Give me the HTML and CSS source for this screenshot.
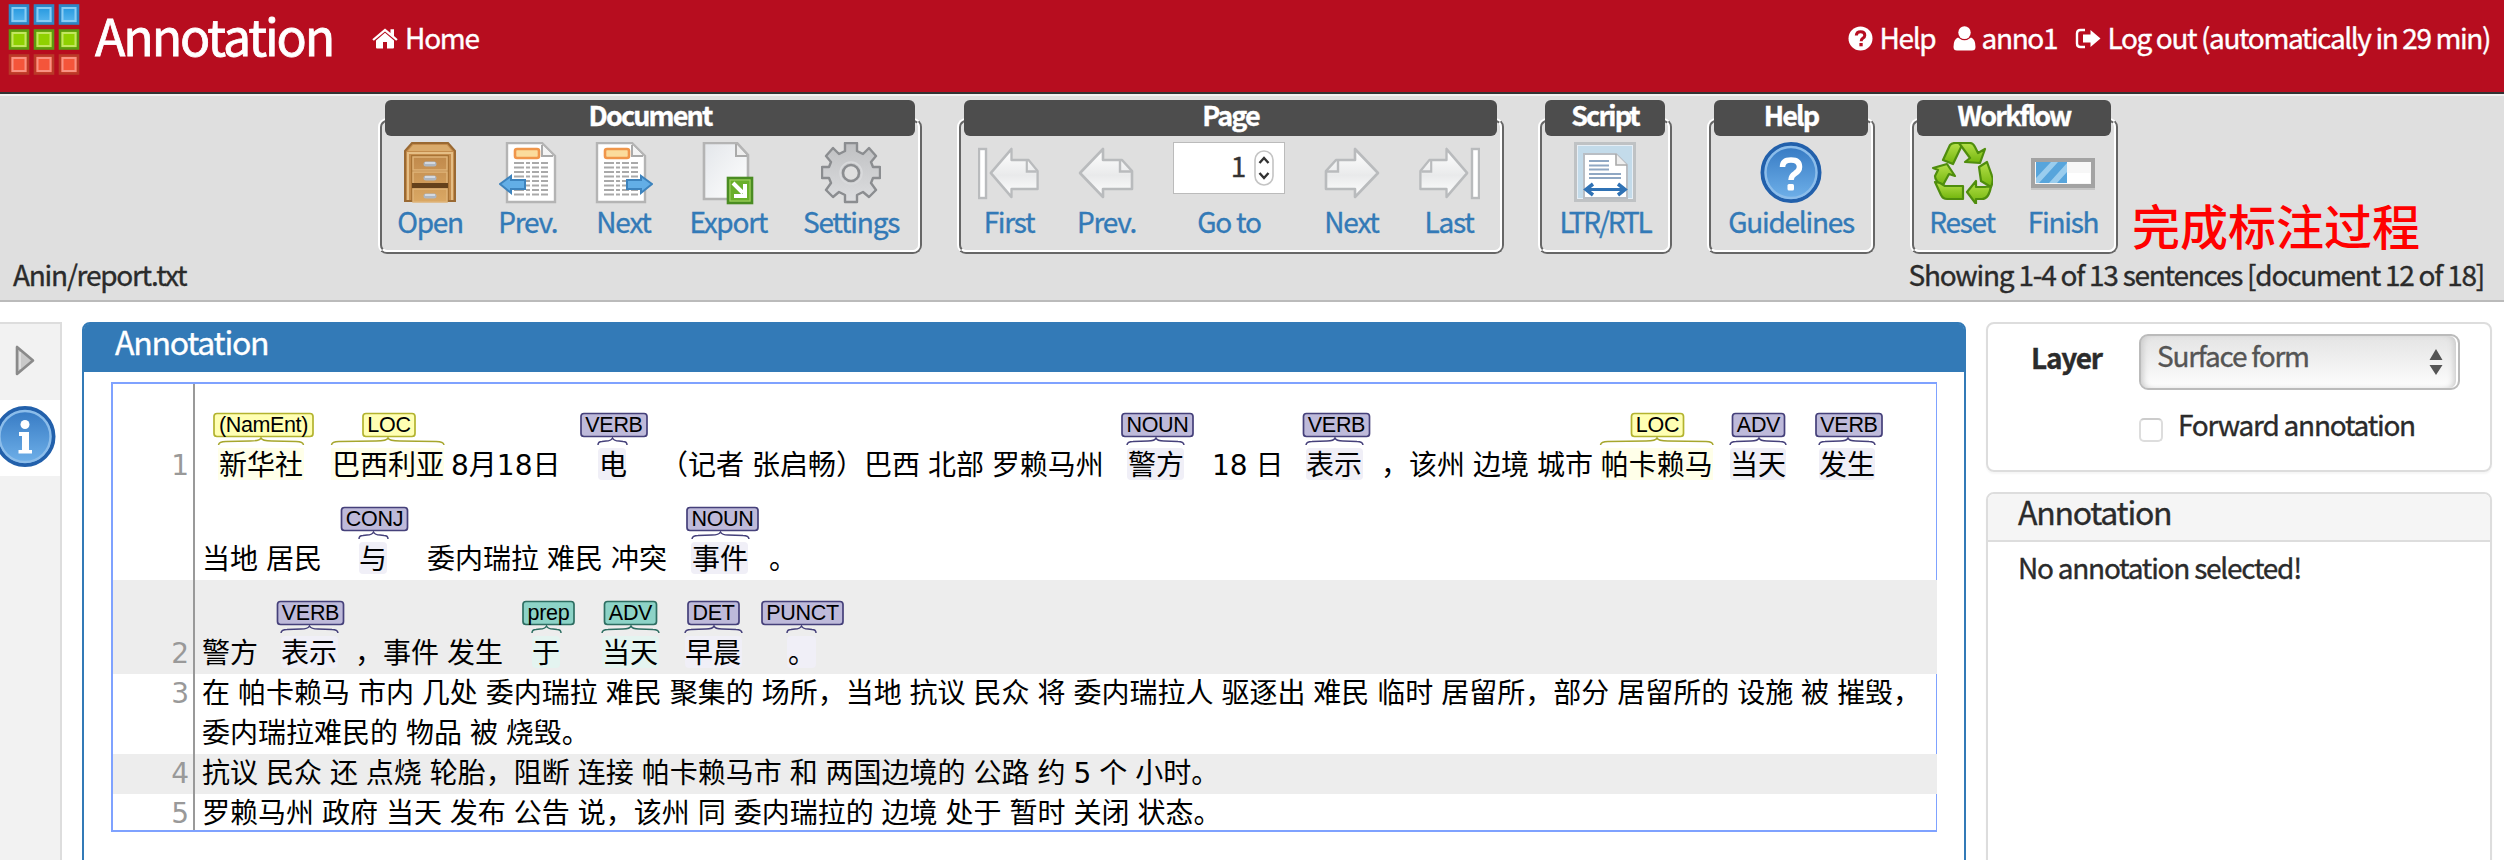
FILE: index.html
```html
<!DOCTYPE html>
<html lang="en">
<head>
<meta charset="utf-8">
<title>Annotation</title>
<link rel="stylesheet" href="styles.css">
</head>
<body>
<svg class="defs" width="0" height="0">
  <defs>
    <linearGradient id="gBlueSq" x1="0" y1="0" x2="0" y2="1"><stop offset="0" stop-color="#1f95dd"/><stop offset="1" stop-color="#5db9f0"/></linearGradient>
    <linearGradient id="gWood" x1="0" y1="0" x2="0" y2="1"><stop offset="0" stop-color="#c18a4c"/><stop offset="1" stop-color="#daa864"/></linearGradient>
    <linearGradient id="gBlue" x1="0" y1="0" x2="0" y2="1"><stop offset="0" stop-color="#3478c2"/><stop offset="1" stop-color="#71b2ea"/></linearGradient>
    <linearGradient id="gArrow" x1="0" y1="0" x2="0" y2="1"><stop offset="0" stop-color="#ffffff"/><stop offset=".55" stop-color="#e9eaeb"/><stop offset="1" stop-color="#ffffff"/></linearGradient>
    <linearGradient id="gGear" x1="0" y1="0" x2="0" y2="1"><stop offset="0" stop-color="#bfc0c2"/><stop offset="1" stop-color="#dddee0"/></linearGradient>
    <linearGradient id="gGreen" x1="0" y1="0" x2="0" y2="1"><stop offset="0" stop-color="#b5e04a"/><stop offset="1" stop-color="#72b50c"/></linearGradient>
    <linearGradient id="gPage" x1="0" y1="0" x2="1" y2="1"><stop offset="0" stop-color="#e3e6ea"/><stop offset="1" stop-color="#ffffff"/></linearGradient>
    <g id="textpage">
      <path d="M1 1H36L49 14V60H1Z" fill="#fff" stroke="#b4b4b4" stroke-width="2.4"/>
      <path d="M36 3V14H47" fill="#f4f4f4" stroke="#aaa" stroke-width="2"/>
      <rect x="9" y="7" width="24" height="9" rx="2" fill="#fbdc9c" stroke="#f0964a" stroke-width="2.6"/>
      <path d="M8 21H42M8 25.500H42M8 30H42M8 34.500H42M8 39H42M8 43.500H42M8 48H42M8 52.500H42" stroke="#a9a9a9" stroke-width="2" stroke-dasharray="10 2 4 2 7 2"/>
    </g>
    <path id="pagearrow" d="M2 27L25 3V14H44L54 25V43H25V51Z" fill="url(#gArrow)" stroke="#b9bbbd" stroke-width="2.600" stroke-linejoin="round"/>
    <path id="pagefold" d="M42 15V25.500H53" fill="none" stroke="#b9bbbd" stroke-width="2.400"/>
  </defs>
</svg>

<header class="topbar">
  <svg class="logo" width="74" height="76" viewBox="0 0 74 76">
    <g stroke-width="2.600">
      <g fill="url(#gBlueSq)" stroke="#2e86c4"><rect x="2" y="1.500" width="18" height="18"/><rect x="27" y="1.500" width="18" height="18"/><rect x="52" y="1.500" width="18" height="18"/></g>
      <g fill="#8fd100" stroke="#5d9a10"><rect x="2" y="26.500" width="18" height="18"/><rect x="27" y="26.500" width="18" height="18"/><rect x="52" y="26.500" width="18" height="18"/></g>
      <g fill="#f4553a" stroke="#b93a28"><rect x="2" y="51.500" width="18" height="18"/><rect x="27" y="51.500" width="18" height="18"/><rect x="52" y="51.500" width="18" height="18"/></g>
    </g>
    <g fill="none" stroke-width="2">
      <g stroke="#8accf3"><rect x="4.500" y="4" width="13" height="13"/><rect x="29.500" y="4" width="13" height="13"/><rect x="54.500" y="4" width="13" height="13"/></g>
      <g stroke="#c3e660"><rect x="4.500" y="29" width="13" height="13"/><rect x="29.500" y="29" width="13" height="13"/><rect x="54.500" y="29" width="13" height="13"/></g>
      <g stroke="#f99182"><rect x="4.500" y="54" width="13" height="13"/><rect x="29.500" y="54" width="13" height="13"/><rect x="54.500" y="54" width="13" height="13"/></g>
    </g>
  </svg>
  <h1 class="title">Annotation</h1>
  <a class="nav home"><svg width="26" height="22" viewBox="0 0 26 22" fill="#fff"><path d="M13 4.800L4 12.500V19.500Q4 20.500 5 20.500H11V14H15V20.500H21Q22 20.500 22 19.500V12.500Z"/><path d="M13 .500L.300 11.200L1.800 12.800L13 3.500L24.200 12.800L25.700 11.200L22 8V1.200H18.500V5.100Z"/></svg>Home</a>
  <nav class="user">
    <a class="nav help"><svg width="25" height="25" viewBox="0 0 25 25"><circle cx="12.500" cy="12.500" r="12" fill="#fff"/><path d="M8.300 9.500Q8.500 5.800 12.600 5.800Q16.800 5.800 16.800 9.200Q16.800 11 14.800 12.300Q13.200 13.300 13.200 15.200" fill="none" stroke="#b70d1f" stroke-width="3"/><rect x="11.400" y="17" width="3.300" height="3.300" fill="#b70d1f"/></svg>Help</a>
    <a class="nav anno"><svg width="23" height="25" viewBox="0 0 23 25" fill="#fff"><ellipse cx="11.500" cy="6.600" rx="6.200" ry="6.400"/><path d="M5 11.500Q11.500 17 18 11.500Q22.500 13 22.500 21Q22.500 24.500 19 24.500H4Q.500 24.500 .500 21Q.500 13 5 11.500Z"/></svg>anno1</a>
    <a class="nav logout"><svg width="26" height="22" viewBox="0 0 26 22"><path d="M10 2H5.500Q2 2 2 5.500V15.500Q2 19 5.500 19H10" fill="none" stroke="#fff" stroke-width="2.400"/><path d="M15.500 2L25.500 10.500L15.500 19V14.500H8V6.500H15.500Z" fill="#fff"/></svg>Log out (automatically in 29 min)</a>
  </nav>
</header>

<section class="toolbar">
  <div class="groups">
    <div class="group doc"><h2>Document</h2><div class="frame"><div class="items">
      <a class="item open"><svg width="54" height="62" viewBox="0 0 54 62"><path d="M9 1H45L52 9V59H2V9Z" fill="#c48c4c" stroke="#9a6932" stroke-width="2"/><path d="M10 3H44L49 9H5Z" fill="#daab6c"/><path d="M5 11H49M5 10V58M49 10V58" stroke="#e5be85" stroke-width="2"/><rect x="8" y="13" width="38" height="45" fill="#a87335"/><path d="M10 15H44V28H10ZM10 30H44V42H10ZM10 47H44V60H10Z" fill="url(#gWood)" stroke="#dfb478" stroke-width="1.500"/><path d="M9 41H45V46H9Z" fill="#65411b"/><path d="M23 22H31M23 36H31M23 54H31" stroke="#aeb6c0" stroke-width="5" stroke-linecap="round"/><path d="M22 21H32M22 35H32M22 53H32" stroke="#e1e5ea" stroke-width="1.500"/></svg>Open</a>
      <a class="item page"><svg width="58" height="64" viewBox="-7 0 58 64"><use href="#textpage"/><path d="M-6 42L5 34V38H19V47H5V51Z" fill="#63aee6" stroke="#3d83bd" stroke-width="2"/></svg>Prev.</a>
      <a class="item page"><svg width="58" height="64" viewBox="-1 0 58 64"><use href="#textpage"/><path d="M56 42L45 34V38H31V47H45V51Z" fill="#63aee6" stroke="#3d83bd" stroke-width="2"/></svg>Next</a>
      <a class="item export"><svg width="52" height="64" viewBox="0 0 52 64"><path d="M2 1H35L46 13V57H2Z" fill="url(#gPage)" stroke="#b4b4b4" stroke-width="2.600"/><path d="M34 2V14H45" fill="#eee" stroke="#aaa" stroke-width="2"/><rect x="26" y="36" width="24" height="25" fill="#6aaf2a" stroke="#4a8c22" stroke-width="2.600"/><rect x="28" y="38" width="20" height="21" fill="none" stroke="#9ccc60" stroke-width="1.200"/><path d="M31 41L41 51M43 42V54H32" stroke="#fff" stroke-width="4" fill="none"/></svg>Export</a>
      <a class="item settings"><svg width="60" height="62" viewBox="0 0 60 62"><path d="M24 1H36V9L42 12L48 6L55 14L50 20L52 25H59V36H52L50 41L55 48L48 55L42 50L36 53V60H24V53L18 50L12 55L5 48L10 41L8 36H1V25H8L10 20L5 14L12 6L18 12L24 9Z" fill="url(#gGear)" stroke="#8b8d90" stroke-width="2.400" stroke-linejoin="round"/><circle cx="30" cy="31" r="8" fill="#dfdfdf" stroke="#8b8d90" stroke-width="2.600"/><circle cx="30" cy="31" r="11" fill="none" stroke="#d9dadc" stroke-width="1.500"/></svg>Settings</a>
    </div></div></div>
    <div class="group pg"><h2>Page</h2><div class="frame"><div class="items">
      <a class="item first"><svg width="62" height="62" viewBox="-7 -4 62 62"><rect x="-6" y="3" width="7" height="49" fill="#fff" stroke="#b9bbbd" stroke-width="2.400"/><g transform="translate(4 0) scale(.9 1)"><use href="#pagearrow"/><use href="#pagefold"/></g></svg>First</a>
      <a class="item prev"><svg width="57" height="62" viewBox="0 -4 57 62"><use href="#pagearrow"/><use href="#pagefold"/></svg>Prev.</a>
      <div class="item goto"><span class="num"><span>1</span><svg width="20" height="36" viewBox="0 0 20 36"><rect x="1" y="1" width="18" height="34" rx="9" fill="#fff" stroke="#c4c4c4" stroke-width="1.600"/><path d="M5.500 13L10 8L14.500 13M5.500 23L10 28L14.500 23" fill="none" stroke="#333" stroke-width="2.400"/></svg></span>Go to</div>
      <a class="item next"><svg width="57" height="62" viewBox="0 -4 57 62"><g transform="translate(57 0) scale(-1 1)"><use href="#pagearrow"/><use href="#pagefold"/></g></svg>Next</a>
      <a class="item last"><svg width="62" height="62" viewBox="0 -4 62 62"><rect x="54" y="3" width="7" height="49" fill="#fff" stroke="#b9bbbd" stroke-width="2.400"/><g transform="translate(51 0) scale(-.9 1)"><use href="#pagearrow"/><use href="#pagefold"/></g></svg>Last</a>
    </div></div></div>
    <div class="group script"><h2>Script</h2><div class="frame"><div class="items">
      <a class="item"><svg width="62" height="62" viewBox="0 0 62 62"><rect x="1.500" y="1.500" width="59" height="57" fill="#e6eef5" stroke="#bfc2c4" stroke-width="3"/><rect x="4" y="4" width="54" height="52" fill="#c3dbea"/><path d="M10 56V12H42L53 23V56Z" fill="#fff" stroke="#b9bec4" stroke-width="2"/><path d="M42 12V23H53" fill="#eee" stroke="#a9a9a9" stroke-width="1.600"/><path d="M15 19H35M15 23.500H35M15 27.500H35M15 32H47M15 36H47" stroke="#8fa7c3" stroke-width="2"/><path d="M13 47.500H50" stroke="#2f72b5" stroke-width="3"/><path d="M19 42L12 47.500L19 53M44 42L51 47.500L44 53" fill="none" stroke="#2f72b5" stroke-width="3.500"/></svg>LTR/RTL</a>
    </div></div></div>
    <div class="group guide"><h2>Help</h2><div class="frame"><div class="items">
      <a class="item"><svg width="62" height="62" viewBox="0 0 62 62"><circle cx="31" cy="30.500" r="28.500" fill="url(#gBlue)" stroke="#2260ab" stroke-width="4"/><circle cx="31" cy="30.500" r="25.500" fill="none" stroke="#8cbdea" stroke-width="2.400"/><path d="M22.500 25Q22.500 18 31 18Q39.500 18 39.500 25Q39.500 29 35 31.500Q31 34 31 38" fill="none" stroke="#fff" stroke-width="5.500"/><rect x="27.500" y="42" width="6.500" height="6.500" rx="1.500" fill="#fff"/></svg>Guidelines</a>
    </div></div></div>
    <div class="group flow"><h2>Workflow</h2><div class="frame"><div class="items">
      <a class="item reset"><svg width="62" height="62" viewBox="0 0 62 62" stroke-linejoin="round"><g fill="url(#gGreen)" stroke="#4f8d0d" stroke-width="2.200"><path d="M12 18L19 3Q21 1 24 1H32L22 22Z"/><path d="M28 1H39Q42 1 44 5L47 11L54 7L49 21L34 20L39 16Z"/><path d="M2 26L16 22L24 34L18 32L12 43Q4 40 4 34L7 28Z"/><path d="M9 41L14 44H32V57H16Q12 57 10 53L4 40Z"/><path d="M48 25L56 20L61 34Q63 38 60 45L50 39Z"/><path d="M60 44Q58 57 51 57H45V62L36 50L45 39V45H54Z"/></g></svg>Reset</a>
      <a class="item finish"><svg width="64" height="62" viewBox="0 0 64 62"><rect x="2" y="18" width="60" height="26" fill="#f7f7f7" stroke="#a3a3a3" stroke-width="4"/><path d="M0 47H64" stroke="#c6c6c6" stroke-width="2"/><rect x="5" y="20" width="31" height="21" fill="#57a5dc"/><path d="M5 36L20 20H27L8 41H5ZM18 41L36 21V30L26 41Z" fill="#9acdee"/><path d="M36 31H59V41H36Z" fill="#fff"/></svg>Finish</a>
    </div></div></div>
    <strong class="note">完成标注过程</strong>
  </div>
  <div class="status"><span class="file">Anin/report.txt</span><span class="count">Showing 1-4 of 13 sentences [document 12 of 18]</span></div>
</section>

<main class="content">
  <aside class="side">
    <div class="tab"><svg width="20" height="32" viewBox="0 0 20 32"><path d="M2 2V29L18 15.500Z" fill="#c9c9c9" stroke="#8a8a8a" stroke-width="2.600" stroke-linejoin="round"/><path d="M5 7V24" stroke="#e6e6e6" stroke-width="1.500"/></svg></div>
    <div class="tab active"><svg width="62" height="62" viewBox="0 0 62 62"><circle cx="31" cy="30.500" r="28.500" fill="url(#gBlue)" stroke="#2260ab" stroke-width="4"/><circle cx="31" cy="30.500" r="25.500" fill="none" stroke="#8cbdea" stroke-width="2.400"/><circle cx="31" cy="18.500" r="4.500" fill="#fff"/><path d="M25 26H35V44H38V47.500H24.500V44H28V30H25Z" fill="#fff"/></svg></div>
  </aside>

  <section class="editor">
    <h3>Annotation</h3>
    <div class="canvas">
    <svg width="1824" height="446" viewBox="113 384 1824 446">
      <path d="M113 580H1937V674H113ZM113 754H1937V794H113Z" fill="#ededed"/>
      <path d="M194 384V830" stroke="#999" stroke-width="2"/>
      <g class="hl-ent"><rect x="218" y="448" width="86" height="32"/><rect x="331" y="448" width="113" height="32"/><rect x="1601" y="448" width="112" height="32"/></g>
      <g class="hl-pos"><rect x="598" y="448" width="28" height="32" rx="4"/><rect x="1127" y="448" width="57" height="32" rx="4"/><rect x="1306" y="448" width="57" height="32" rx="4"/><rect x="1730" y="448" width="56" height="32" rx="4"/><rect x="1819" y="448" width="56" height="32" rx="4"/><rect x="359" y="542" width="28" height="32" rx="4"/><rect x="691" y="542" width="57" height="32" rx="4"/><rect x="281" y="636" width="57" height="32" rx="4"/><rect x="685" y="636" width="57" height="32" rx="4"/><rect x="787" y="636" width="29" height="32" rx="4"/></g>
      <g class="hl-adv"><rect x="532" y="636" width="28" height="32" rx="4"/><rect x="602" y="636" width="57" height="32" rx="4"/></g>

      <g class="tag ent"><rect x="214" y="413.500" width="99" height="23" rx="3"/><text x="263.500" y="432" textLength="89">(NamEnt)</text><path d="M218.500 445Q219 441.500 226 441.500L250 441Q260 441 261 438Q262 441 272 441L296 441.500Q303 441.500 303.500 445"/>
        <rect x="363" y="413.500" width="52" height="23" rx="3"/><text x="389" y="432">LOC</text><path d="M331.500 445Q332 441.500 339 441.500L376 441Q387 441 388 438Q389 441 400 441L436 441.500Q443.500 441.500 444 445"/>
        <rect x="1631.500" y="413.500" width="52" height="23" rx="3"/><text x="1657.500" y="432">LOC</text><path d="M1600.500 445Q1601 441.500 1608 441.500L1646 441Q1656 441 1657 438Q1658 441 1668 441L1706 441.500Q1712.500 441.500 1713 445"/></g>
      <g class="tag pos">
        <rect x="581" y="413.500" width="66" height="23" rx="3"/><text x="614" y="432">VERB</text><path d="M598 445Q598 441.500 602 441.500L606 441Q611 441 612.500 438Q614 441 619 441L623 441.500Q627 441.500 627 445"/>
        <rect x="1122" y="413.500" width="71" height="23" rx="3"/><text x="1157.500" y="432">NOUN</text><path d="M1127 445Q1127.500 441.500 1133 441.500L1148 441Q1155 441 1156 438Q1157 441 1164 441L1178 441.500Q1183.500 441.500 1184 445"/>
        <rect x="1303.500" y="413.500" width="66" height="23" rx="3"/><text x="1336.500" y="432">VERB</text><path d="M1306 445Q1306.500 441.500 1312 441.500L1327 441Q1334 441 1335 438Q1336 441 1343 441L1357 441.500Q1362.500 441.500 1363 445"/>
        <rect x="1732.500" y="413.500" width="52" height="23" rx="3"/><text x="1758.500" y="432">ADV</text><path d="M1730 445Q1730.500 441.500 1736 441.500L1751 441Q1758 441 1759 438Q1760 441 1767 441L1780 441.500Q1785.500 441.500 1786 445"/>
        <rect x="1816" y="413.500" width="66" height="23" rx="3"/><text x="1849" y="432">VERB</text><path d="M1819 445Q1819.500 441.500 1825 441.500L1840 441Q1847 441 1848 438Q1849 441 1856 441L1869 441.500Q1874.500 441.500 1875 445"/>
        <rect x="341.500" y="507.500" width="66" height="23" rx="3"/><text x="374.500" y="526">CONJ</text><path d="M359 539Q359 535.500 363 535.500L367 535Q372 535 373.500 532Q375 535 380 535L384 535.500Q388 535.500 388 539"/>
        <rect x="687" y="507.500" width="71" height="23" rx="3"/><text x="722.500" y="526">NOUN</text><path d="M692 539Q692.500 535.500 698 535.500L712 535Q719 535 720.500 532Q722 535 728 535L743 535.500Q748.500 535.500 749 539"/>
        <rect x="277.500" y="601.500" width="66" height="23" rx="3"/><text x="310.500" y="620">VERB</text><path d="M281 633Q281.500 629.500 287 629.500L301 629Q308 629 309.500 626Q311 629 318 629L332 629.500Q337.500 629.500 338 633"/>
        <rect x="688" y="601.500" width="51" height="23" rx="3"/><text x="713.500" y="620">DET</text><path d="M685 633Q685.500 629.500 691 629.500L706 629Q713 629 714 626Q715 629 722 629L736 629.500Q741.500 629.500 742 633"/>
        <rect x="762" y="601.500" width="81" height="23" rx="3"/><text x="802.500" y="620">PUNCT</text><path d="M787 633Q787 629.500 791 629.500L795 629Q800 629 801.500 626Q803 629 808 629L812 629.500Q816 629.500 816 633"/></g>
      <g class="tag adv">
        <rect x="523" y="601.500" width="51" height="23" rx="3"/><text x="548.500" y="620">prep</text><path d="M532 633Q532 629.500 536 629.500L540 629Q545 629 546.500 626Q548 629 553 629L557 629.500Q561 629.500 561 633"/>
        <rect x="604.500" y="601.500" width="52" height="23" rx="3"/><text x="630.500" y="620">ADV</text><path d="M602 633Q602.500 629.500 608 629.500L623 629Q630 629 631 626Q632 629 639 629L653 629.500Q658.500 629.500 659 633"/></g>

      <g class="words">
        <text x="219" y="475">新华社</text><text x="332" y="475">巴西利亚</text><text x="451" y="475">8月18日</text><text x="599" y="475">电</text><text x="660" y="475">（记者 张启畅）巴西 北部 罗赖马州</text><text x="1128" y="475">警方</text><text x="1212" y="475">18 日</text><text x="1306" y="475">表示</text><text x="1381" y="475">，</text><text x="1409" y="475">该州 边境 城市 帕卡赖马</text><text x="1730" y="475">当天</text><text x="1819" y="475">发生</text>
        <text x="202" y="569">当地 居民</text><text x="359" y="569">与</text><text x="427" y="569">委内瑞拉 难民 冲突</text><text x="692" y="569">事件</text><text x="769" y="569">。</text>
        <text x="202" y="663">警方</text><text x="281" y="663">表示</text><text x="355" y="663">，</text><text x="383" y="663">事件 发生</text><text x="532" y="663">于</text><text x="602" y="663">当天</text><text x="685" y="663">早晨</text><text x="788" y="663">。</text>
        <text x="202" y="703">在 帕卡赖马 市内 几处 委内瑞拉 难民 聚集的 场所，当地 抗议 民众 将 委内瑞拉人 驱逐出 难民 临时 居留所，部分 居留所的 设施 被 摧毁，</text>
        <text x="202" y="743">委内瑞拉难民的 物品 被 烧毁。</text>
        <text x="202" y="783">抗议 民众 还 点烧 轮胎，阻断 连接 帕卡赖马市 和 两国边境的 公路 约 5 个 小时。</text>
        <text x="202" y="823">罗赖马州 政府 当天 发布 公告 说，该州 同 委内瑞拉的 边境 处于 暂时 关闭 状态。</text>
      </g>
      <g class="lineno"><text x="189" y="475">1</text><text x="189" y="663">2</text><text x="189" y="703">3</text><text x="189" y="783">4</text><text x="189" y="823">5</text></g>
    </svg>
    </div>
  </section>

  <aside class="detail">
    <section class="card options">
      <div class="row"><b>Layer</b><span class="select">Surface form<svg width="14" height="26" viewBox="0 0 14 26" fill="#555"><path d="M7 0L13.500 11H.500ZM7 26L.500 16H13.500Z"/></svg></span></div>
      <label class="check"><i></i>Forward annotation</label>
    </section>
    <section class="card info"><h4>Annotation</h4><p>No annotation selected!</p></section>
  </aside>
</main>
</body>
</html>
```
FILE: styles.css
```css
* { box-sizing: border-box; }
body { margin: 0; width: 2504px; height: 860px; overflow: hidden; background: #fff; color: #2b2b2b; font-family: "Noto Sans CJK SC", "Noto Sans", sans-serif; font-size: 28px; font-weight: 400; line-height: 40px; letter-spacing: -1.25px; -webkit-text-stroke: .35px; }
h1, h2, h3, h4, p { margin: 0; font-weight: 400; }
svg { display: block; flex: none; }
.defs { position: absolute; }

.topbar { display: flex; height: 94px; background: #b70d1f; border-bottom: 2px solid #333; color: #fff; }
.logo { margin: 4px 0 0 8px; }
.title { margin-left: 13px; width: 277px; font-size: 50px; line-height: 68px; letter-spacing: -2.1px; -webkit-text-stroke: .8px; white-space: nowrap; }
.nav { display: flex; height: 40px; margin-top: 17px; gap: 7px; white-space: nowrap; }
.home svg { margin-top: 11px; }
.user { display: flex; margin-left: auto; padding-right: 14px; letter-spacing: -1.4px; }
.help { width: 105px; }
.help svg, .anno svg { margin-top: 9px; }
.anno { width: 122px; }
.anno svg { margin-right: -1px; }
.logout svg { margin-top: 11px; }

.toolbar { height: 208px; background: #dfdfdf; border-top: 2px solid #f2f2f2; border-bottom: 2px solid #bbb; }
.groups { display: flex; height: 158px; padding: 4px 0 0 378px; }
.group { height: 154px; color: #337ab7; }
.group h2 { position: relative; height: 36px; margin: 0 7px; border-radius: 6px; background: #4d4d4d; color: #fff; font-size: 27px; font-weight: 700; line-height: 30px; letter-spacing: -1.9px; text-align: center; }
.frame { height: 136px; margin-top: -18px; border: 2px solid; border-color: #fff #666 #666 #fff; border-radius: 9px; }
.items { display: flex; justify-content: space-between; height: 132px; border: 2px solid; border-color: #666 #fff #fff #666; border-radius: 7px; padding: 20px 18px 0; }
.item { display: flex; flex-direction: column; align-items: center; width: 62px; line-height: 30px; white-space: nowrap; }
.item svg { height: 62px; margin-bottom: 2px; }
.item svg[height="64"] { height: 64px; margin-bottom: 0; }
.doc { width: 544px; margin-right: 35px; }
.doc .items { padding: 20px 20px 0 17px; }
.doc .page { width: 58px; }
.doc .export { width: 76px; }
.doc .settings { width: 94px; }
.pg { width: 547px; margin-right: 34px; }
.pg .items { padding: 20px 20px 0 17px; }
.pg .prev, .pg .next { width: 57px; }
.pg .goto { width: 112px; }
.num { display: flex; justify-content: flex-end; gap: 9px; width: 112px; height: 52px; margin-bottom: 12px; padding: 7px 10px 0 0; border: 1px solid #bbb; background: #fff; color: #333; line-height: 30px; }
.num svg { height: 36px; margin: 0; }
.script { width: 134px; margin-right: 35px; }
.script .item { letter-spacing: -2.2px; }
.guide { width: 168px; margin-right: 35px; }
.script .items, .guide .items { justify-content: center; }
.flow { width: 208px; }
.flow .items { padding: 20px 20px 0 17px; }
.note { margin: 88px 0 0 14px; color: #f00; font-weight: 500; font-size: 48px; line-height: 72px; height: 66px; letter-spacing: 0; -webkit-text-stroke: 0; white-space: nowrap; }
.status { display: flex; justify-content: space-between; padding: 0 20px 0 13px; line-height: 41px; }

.content { display: flex; align-items: flex-start; height: 558px; padding-top: 20px; }
.side { width: 62px; height: 538px; background: #f2f2f2; border: solid #ddd; border-width: 2px 2px 0 0; overflow: hidden; }
.tab { height: 76px; padding: 21px 0 0 15px; }
.tab.active { height: 76px; padding: 6px 0 0; background: #fff; }
.active svg { margin-left: -6px; }

.editor { width: 1884px; height: 560px; margin-left: 20px; border: 2px solid #337ab7; border-radius: 8px; }
.editor h3 { height: 48px; padding-left: 31px; background: #337ab7; border-radius: 5px 5px 0 0; color: #fff; font-size: 32px; line-height: 34px; }
.canvas { width: 1826px; height: 450px; margin: 10px 0 0 27px; border: 2px solid #7fa2ff; border-right-width: 1px; letter-spacing: 0; -webkit-text-stroke: 0; }
.words { font: 28px "DejaVu Sans", "Noto Sans CJK SC", sans-serif; word-spacing: -0.95px; fill: #000; }
.lineno { font: 28px "DejaVu Sans", sans-serif; fill: #999; text-anchor: end; }
.tag { font: 21.5px "Liberation Sans", Arial, sans-serif; text-anchor: middle; letter-spacing: -.3px; }
.tag text { fill: #000; }
.tag path { fill: none; stroke-width: 1.5; }
.tag rect { stroke-width: 1.7; }
.ent rect { fill: #ffffb3; stroke: #b3b32f; }
.ent path { stroke: #a6a62c; }
.pos rect { fill: #bebada; stroke: #45407a; }
.pos path { stroke: #45407a; }
.adv rect { fill: #8dd3c7; stroke: #2e6e62; }
.adv path { stroke: #2e6e62; }
.hl-ent { fill: #ffffe9; }
.hl-pos { fill: #f0eff7; }
.hl-adv { fill: #e4f4f0; }

.detail { width: 506px; margin-left: 20px; }
.card { border: 2px solid #ddd; border-radius: 8px; box-shadow: 0 2px 2px rgba(0, 0, 0, .04); }
.options { height: 150px; padding: 10px 0 0 43px; }
.row { display: flex; line-height: 46px; }
.row b { width: 108px; }
.select { display: flex; justify-content: space-between; width: 321px; height: 56px; padding: 0 15px 0 16px; border: 2px solid #bbb; border-radius: 9px; background: linear-gradient(#e4e4e4, #fdfdfd); box-shadow: inset 5px 0 6px -3px #c9c9c9, inset -2px 0 0 #fff, inset -7px 0 6px -3px #c9c9c9; color: #555; line-height: 39px; }
.select svg { margin-top: 13px; }
.check { display: flex; gap: 15px; margin: 22px 0 0 108px; line-height: 25px; }
.check i { width: 24px; height: 24px; margin-top: 6px; border: 2px solid #ddd; border-top-color: #ccc; border-radius: 5px; background: #fff; }
.info { height: 400px; margin-top: 20px; }
.info h4 { height: 48px; padding-left: 30px; border-bottom: 2px solid #ddd; background: #f5f5f5; border-radius: 6px 6px 0 0; font-size: 32px; line-height: 34px; }
.info p { padding: 3px 0 0 30px; line-height: 44px; }
```
